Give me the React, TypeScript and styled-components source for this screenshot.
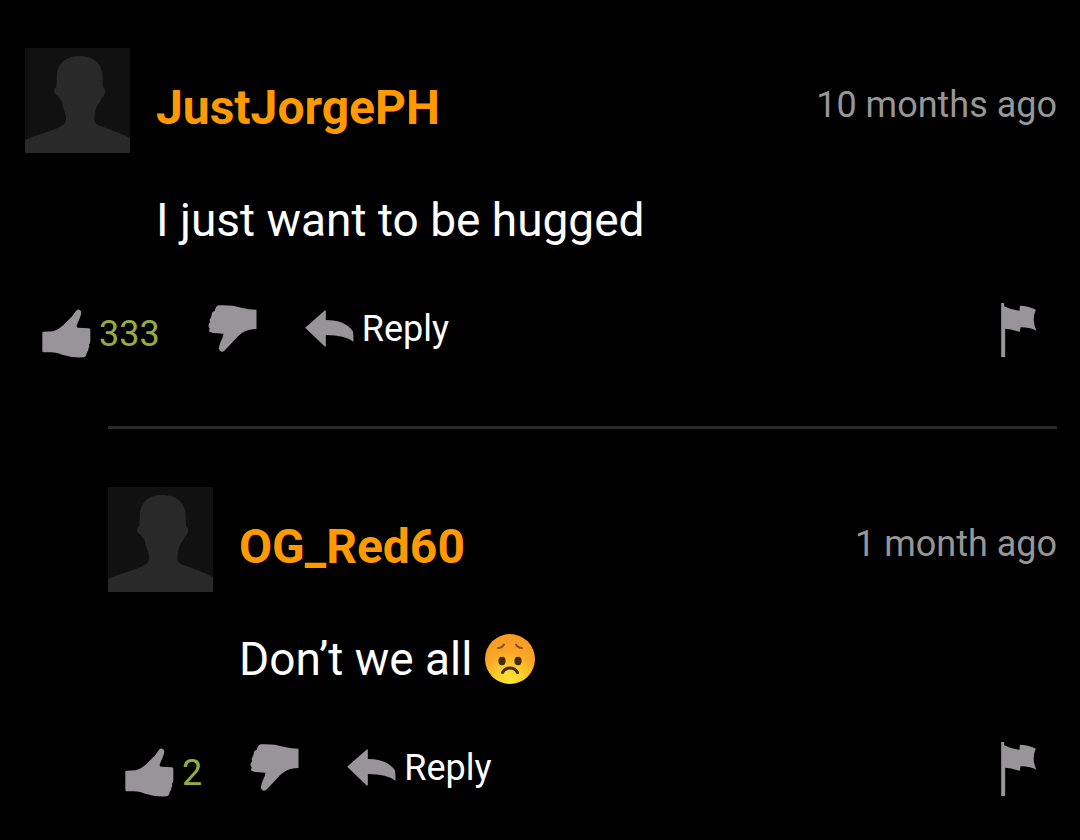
import React from "react";
import styled, { createGlobalStyle } from "styled-components";

const GlobalStyle = createGlobalStyle`
  *, *::before, *::after { box-sizing: border-box; }
  html { background: #000; }
  body {
    margin: 0;
    background: #000;
    color: #fff;
    font-family: Roboto, "Liberation Sans", sans-serif;
  }
`;

const Thread = styled.main`
  padding: 48px 23px 40px 25px;
`;

const Replies = styled.section`
  margin: 68px 0 0 83px;
  padding-top: 58px;
  border-top: 3px solid #2b2b2b;
`;

const CommentHeader = styled.header`
  display: flex;
  align-items: center;
`;

const Avatar = styled.svg`
  flex: none;
  display: block;
  width: 105px;
  height: 105px;
  background: #111;
`;

const UserName = styled.a`
  margin-left: 26px;
  padding-top: 14px;
  color: #ff9900;
  font-size: 48px;
  line-height: 54px;
  font-weight: 700;
  text-decoration: none;
`;

const PostedAt = styled.time`
  margin-left: auto;
  padding-top: 8px;
  color: #969696;
  font-size: 36px;
  line-height: 42px;
`;

const Message = styled.p`
  display: flex;
  align-items: center;
  gap: 12px;
  margin: 40px 0 0 131px;
  font-size: 46px;
  line-height: 54px;
`;

const Actions = styled.footer`
  display: flex;
  align-items: center;
  height: 55px;
  margin-top: 56px;
  padding: 0 20px 0 17px;
`;

const ActionButton = styled.button`
  display: flex;
  align-items: center;
  gap: 8px;
  margin: 0;
  padding: 0;
  border: 0;
  background: none;
  color: #fff;
  font: inherit;
  font-size: 36px;
  line-height: 42px;
  cursor: pointer;
`;

const UpvoteButton = styled(ActionButton)`
  align-self: flex-end;
  color: #95ad3a;
`;

const RaisedButton = styled(ActionButton)`
  margin-left: 48px;
  padding-bottom: 4px;
`;

const FlagButton = styled(ActionButton)`
  margin-left: auto;
  align-self: flex-start;
`;

const Icon = styled.svg<{ $width: number; $height: number }>`
  display: block;
  flex: none;
  width: ${(p) => p.$width}px;
  height: ${(p) => p.$height}px;
  fill: #979598;
`;

const Emoji = styled.svg`
  display: block;
  flex: none;
  width: 52px;
  height: 52px;
`;

const ThumbUp = () => (
  <Icon $width={49} $height={49} viewBox="0 0 146 148" aria-hidden="true">
    <path d="M0 71Q0 69 3 69L33 67Q50 62 62 50L90 22L102 5Q110-3 117 7Q119 14 113 28L104 49Q103 56 108 57L140 58Q145 58 145 63V95Q145 104 141 108L142 114Q138 120 139 124L134 134Q132 146 124 146Q90 148 60 138Q38 131 28 131H5Q0 131 0 126Z" />
  </Icon>
);

const ThumbDown = () => (
  <Icon $width={49} $height={47} viewBox="0 0 146 141" aria-hidden="true">
    <path d="M145 14V72L133 73Q110 75 90 93L70 115L50 136Q46 141 41 140Q34 139 32 131Q33 118 43 98L46 86L16 84Q2 82 2 76L5 72Q-1 62 2 58L6 50Q2 44 8 38L11 28Q10 20 20 17Q22 3 32 1Q70-1 100 8Q125 14 145 14Z" />
  </Icon>
);

const ReplyArrow = () => (
  <Icon $width={49} $height={37} viewBox="0 0 146 111" aria-hidden="true">
    <path d="M0 53L58 2Q62-1 62 4V30Q120 30 143 64Q145 68 145 95Q120 76 62 75V107Q62 112 58 109Z" />
  </Icon>
);

const Flag = () => (
  <Icon $width={36} $height={54} viewBox="0 0 107 162" aria-hidden="true">
    <path d="M0 0H9V10Q30 21 55 23L56 8Q80 8 104 20Q90 50 106 84Q90 73 58 73L56 86L48 85Q30 78 12 77V162H0Z" />
  </Icon>
);

const WorriedFace = () => (
  <Emoji viewBox="0 0 52 52" role="img" aria-label="disappointed face">
    <defs>
      <radialGradient id="face" cx="26" cy="48" r="44" gradientUnits="userSpaceOnUse">
        <stop offset="0" stopColor="#ffe534" />
        <stop offset="0.3" stopColor="#fdcf2c" />
        <stop offset="0.65" stopColor="#fba728" />
        <stop offset="1" stopColor="#f99a24" />
      </radialGradient>
    </defs>
    <circle cx="26" cy="26" r="25" fill="url(#face)" />
    <ellipse cx="18" cy="28" rx="3.6" ry="4.2" fill="#422b0d" />
    <ellipse cx="34" cy="28" rx="3.6" ry="4.2" fill="#422b0d" />
    <g fill="none" strokeLinecap="round">
      <path d="M14 15Q18 15 20 11.500M32 11.500Q34 15 38 15" stroke="#8a5018" strokeWidth="2" />
      <path d="M18.500 39.500Q21 35 26 35T33.500 39.500" stroke="#422b0d" strokeWidth="3" />
    </g>
  </Emoji>
);

type CommentProps = {
  name: string;
  posted: string;
  votes: number;
  children: React.ReactNode;
};

const Comment = ({ name, posted, votes, children }: CommentProps) => (
  <article>
    <CommentHeader>
      <Avatar viewBox="0 0 315 315" role="img" aria-label={`${name} avatar`}>
        <path
          fill="#292929"
          d="M0 276Q20 266 60 254Q105 239 119 227Q126 218 121 196Q114 184 110 160Q103 151 98 143Q88 140 87 130Q88 121 94 116L96 75Q105 25 163 24Q222 25 232 75L234 117Q242 122 241 133Q238 145 230 150Q224 164 215 175Q207 196 208 216Q210 229 228 235Q280 253 315 270V315H0Z"
        />
      </Avatar>
      <UserName href="#">{name}</UserName>
      <PostedAt>{posted}</PostedAt>
    </CommentHeader>
    <Message>{children}</Message>
    <Actions>
      <UpvoteButton type="button" aria-label={`Like, ${votes}`}>
        <ThumbUp />
        {votes}
      </UpvoteButton>
      <RaisedButton type="button" aria-label="Dislike">
        <ThumbDown />
      </RaisedButton>
      <RaisedButton type="button">
        <ReplyArrow />
        Reply
      </RaisedButton>
      <FlagButton type="button" aria-label="Report comment">
        <Flag />
      </FlagButton>
    </Actions>
  </article>
);

export default function App() {
  return (
    <>
      <GlobalStyle />
      <Thread>
        <Comment name="JustJorgePH" posted="10 months ago" votes={333}>
          I just want to be hugged
        </Comment>
        <Replies>
          <Comment name="OG_Red60" posted="1 month ago" votes={2}>
            Don’t we all
            <WorriedFace />
          </Comment>
        </Replies>
      </Thread>
    </>
  );
}
